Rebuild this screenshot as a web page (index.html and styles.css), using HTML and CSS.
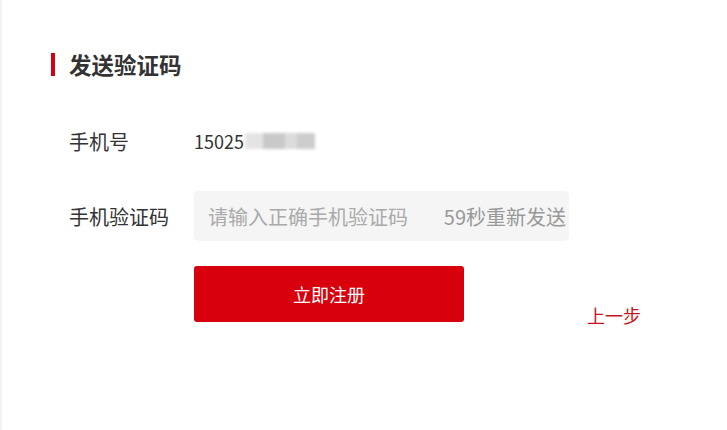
FILE: index.html
```html
<!DOCTYPE html>
<html lang="zh-CN">
<head>
  <meta charset="UTF-8">
  <meta name="viewport" content="width=device-width, initial-scale=1.0">
  <title>发送验证码</title>
  <link rel="stylesheet" href="styles.css">
</head>
<body>
  <div class="panel">
    <h2 class="title">发送验证码</h2>
    <div class="form">
      <div class="row">
        <label class="label">手机号</label>
        <div class="phone">15025<span class="mask"><i class="m1"></i><i class="m2"></i><i class="m3"></i><i class="m4"></i></span></div>
      </div>
      <div class="row">
        <label class="label">手机验证码</label>
        <div class="code-box">
          <input type="text" class="code-input" placeholder="请输入正确手机验证码">
          <span class="countdown">59秒重新发送</span>
        </div>
      </div>
      <div class="row actions">
        <button class="submit">立即注册</button>
        <a href="#" class="back">上一步</a>
      </div>
    </div>
  </div>
</body>
</html>
```
FILE: styles.css
```css
* {
  box-sizing: border-box;
}
body {
  margin: 0;
  font-family: "Noto Sans CJK SC", "Liberation Sans", sans-serif;
  color: #333;
  background: #fff;
}
.panel {
  height: 430px;
  border-left: 2px solid #f2f2f2;
  padding: 53px 0 0 49px;
}
.title {
  margin: 0;
  border-left: 4px solid #d7000f;
  padding-left: 14px;
  height: 23px;
  line-height: 23px;
  font-size: 22.5px;
  font-weight: bold;
  color: #333;
}
.form {
  margin-top: 40px;
  padding-left: 18px;
  display: flex;
  flex-direction: column;
  gap: 25px;
}
.row {
  display: flex;
  align-items: center;
  height: 50px;
}
.label {
  width: 125px;
  font-size: 20px;
  color: #333;
}
.phone {
  display: flex;
  align-items: center;
  font-size: 18px;
  color: #333;
}
.mask {
  display: flex;
  height: 16px;
  margin-left: 1px;
  filter: blur(1.5px);
}
.mask i {
  display: block;
  height: 16px;
}
.m1 { width: 18px; background: #e4e4e4; }
.m2 { width: 22px; background: #c9c9c9; }
.m3 { width: 12px; background: #dcdcdc; }
.m4 { width: 18px; background: #cdcdcd; }
.code-box {
  display: flex;
  align-items: center;
  width: 375px;
  height: 50px;
  background: #f5f5f5;
  border-radius: 5px;
  padding: 0 3px 0 14px;
}
.code-input {
  flex: 1;
  min-width: 0;
  border: none;
  background: transparent;
  font-family: inherit;
  font-size: 20px;
  color: #333;
  outline: none;
  padding: 0;
}
.code-input::placeholder {
  color: #aaa;
}
.countdown {
  font-size: 20px;
  color: #999;
}
.actions {
  height: 56px;
  align-items: flex-end;
  padding-left: 125px;
}
.submit {
  width: 270px;
  height: 56px;
  border: none;
  border-radius: 3px;
  background: #d8000d;
  color: #fff;
  font-family: inherit;
  font-size: 18px;
  cursor: pointer;
}
.back {
  margin-left: 123px;
  margin-bottom: -6px;
  font-size: 18px;
  color: #c4161c;
  text-decoration: none;
}
```
